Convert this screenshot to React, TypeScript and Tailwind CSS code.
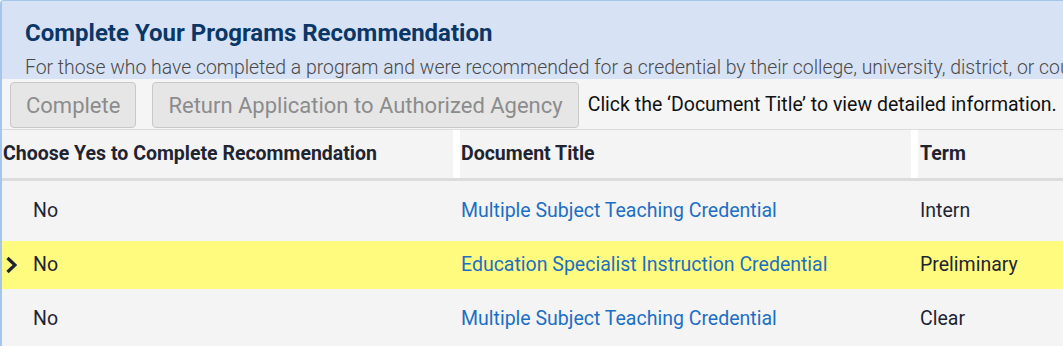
import React from 'react';

const rows = [
  { choice: 'No', title: 'Multiple Subject Teaching Credential', term: 'Intern', selected: false },
  { choice: 'No', title: 'Education Specialist Instruction Credential', term: 'Preliminary', selected: true },
  { choice: 'No', title: 'Multiple Subject Teaching Credential', term: 'Clear', selected: false },
];

function Chevron() {
  return (
    <svg width="12" height="18" viewBox="0 0 12 18" className="text-[#1f2433]">
      <path d="M2.5 2 L10 9 L2.5 16" fill="none" stroke="currentColor" strokeWidth="3.2" />
    </svg>
  );
}

export default function App() {
  return (
    <div
      className="w-[1063px] h-[346px] overflow-hidden bg-[#f4f4f4]"
      style={{ fontFamily: 'Roboto, "Liberation Sans", sans-serif' }}
    >
      <div className="h-full border-l-2 border-t border-[#a3c6ea] rounded-tl-[4px] overflow-hidden">
        {/* header */}
        <div className="h-[78px] bg-[#d7e2f5] pl-[23px] pt-[18px] whitespace-nowrap">
          <h1 className="text-[24px] leading-[28px] font-bold text-[#0b3766]">Complete Your Programs Recommendation</h1>
          <p className="mt-[10px] text-[19.4px] leading-[22px] font-light text-[#4a4a4a]">
            For those who have completed a program and were recommended for a credential by their college, university, district, or county office of education.
          </p>
        </div>

        {/* toolbar */}
        <div className="h-[51px] flex items-start gap-[16px] pl-[8px] pt-[3px] bg-[#f5f5f5] border-b border-[#dcdcdc] whitespace-nowrap">
          <button className="h-[46px] px-[15px] rounded-[4px] border border-[#c8c8c8] bg-[#e6e6e6] text-[22px] text-[#8c8c8c]">
            Complete
          </button>
          <button className="h-[46px] px-[15px] rounded-[4px] border border-[#c8c8c8] bg-[#e6e6e6] text-[22px] text-[#8c8c8c]">
            Return Application to Authorized Agency
          </button>
          <span className="self-center -ml-[7px] -mt-[2px] text-[19.5px] text-[#111]">
            Click the ‘Document Title’ to view detailed information.
          </span>
        </div>

        {/* table header */}
        <div className="flex h-[51px] border-b-[3px] border-[#dcdcdc] text-[19.5px] font-bold text-[#1f2433] whitespace-nowrap">
          <div className="w-[458px] pl-[1px] flex items-center border-r-[7px] border-white">Choose Yes to Complete Recommendation</div>
          <div className="w-[458px] pl-[1px] flex items-center border-r-[7px] border-white">Document Title</div>
          <div className="flex-1 pl-[2px] flex items-center">Term</div>
        </div>

        {/* rows */}
        <div className="pt-[3px] text-[19.5px] whitespace-nowrap">
          {rows.map((r, i) => (
            <div key={i} className="h-[54px] py-[3px]">
              <div className={`h-[48px] flex items-center ${r.selected ? 'bg-[#fffb7f]' : ''}`}>
                <div className="w-[458px] flex items-center">
                  <div className="w-[31px] pl-[3px] flex items-center">{r.selected && <Chevron />}</div>
                  <span className="text-[#1f2433]">{r.choice}</span>
                </div>
                <div className="w-[458px] pl-[1px]">
                  <a className="text-[#1c6fc4] cursor-pointer">{r.title}</a>
                </div>
                <div className="flex-1 pl-[2px] text-[#1f2433]">{r.term}</div>
              </div>
            </div>
          ))}
        </div>
      </div>
    </div>
  );
}
